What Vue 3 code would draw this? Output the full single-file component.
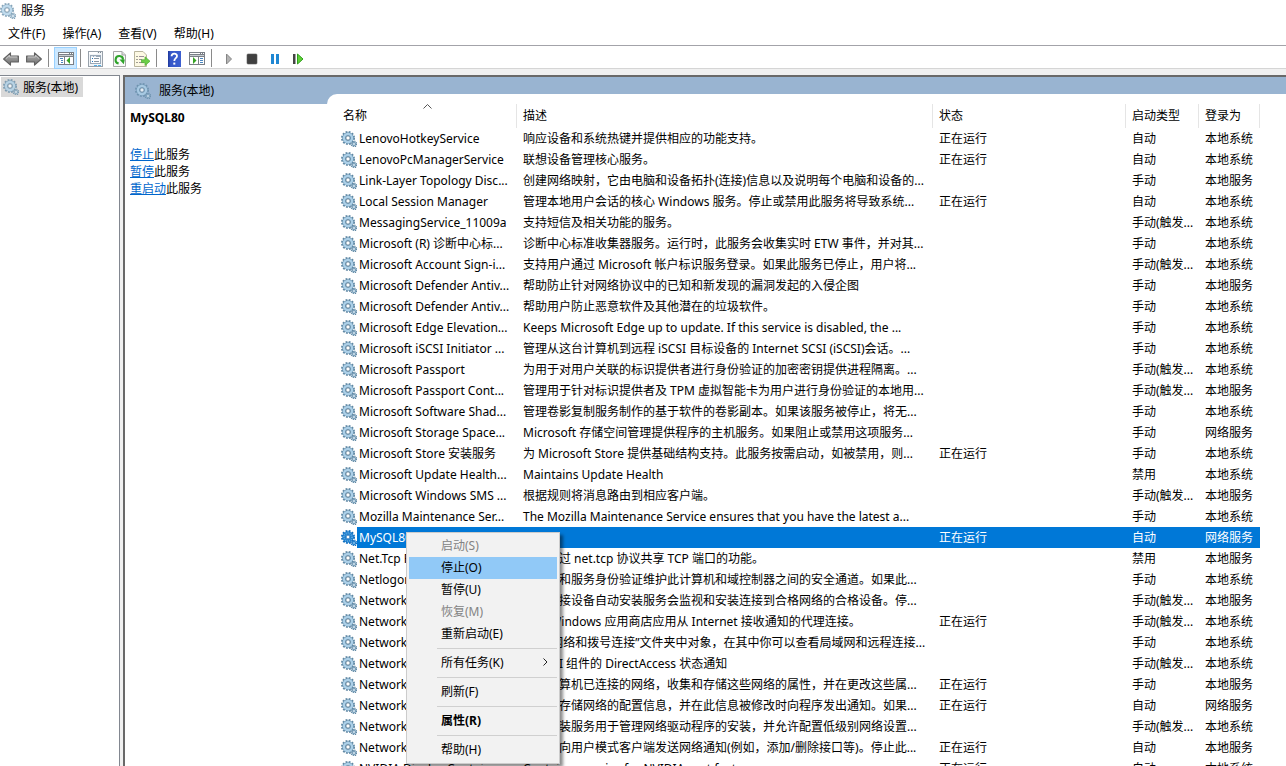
<script setup>
import { ref } from 'vue'

const menus = ['文件(F)', '操作(A)', '查看(V)', '帮助(H)']
const RUN = '正在运行'
const AUTO = '自动'
const MANUAL = '手动'
const TRIGGER = '手动(触发...'
const OFF = '禁用'
const SYS = '本地系统'
const LOCAL = '本地服务'
const NET = '网络服务'

const services = [
  ['LenovoHotkeyService', '响应设备和系统热键并提供相应的功能支持。', RUN, AUTO, SYS],
  ['LenovoPcManagerService', '联想设备管理核心服务。', RUN, AUTO, SYS],
  ['Link-Layer Topology Disc...', '创建网络映射，它由电脑和设备拓扑(连接)信息以及说明每个电脑和设备的...', '', MANUAL, LOCAL],
  ['Local Session Manager', '管理本地用户会话的核心 Windows 服务。停止或禁用此服务将导致系统...', RUN, AUTO, SYS],
  ['MessagingService_11009a', '支持短信及相关功能的服务。', '', TRIGGER, SYS],
  ['Microsoft (R) 诊断中心标...', '诊断中心标准收集器服务。运行时，此服务会收集实时 ETW 事件，并对其...', '', MANUAL, SYS],
  ['Microsoft Account Sign-i...', '支持用户通过 Microsoft 帐户标识服务登录。如果此服务已停止，用户将...', '', TRIGGER, SYS],
  ['Microsoft Defender Antiv...', '帮助防止针对网络协议中的已知和新发现的漏洞发起的入侵企图', '', MANUAL, LOCAL],
  ['Microsoft Defender Antiv...', '帮助用户防止恶意软件及其他潜在的垃圾软件。', '', MANUAL, SYS],
  ['Microsoft Edge Elevation...', 'Keeps Microsoft Edge up to update. If this service is disabled, the ...', '', MANUAL, SYS],
  ['Microsoft iSCSI Initiator ...', '管理从这台计算机到远程 iSCSI 目标设备的 Internet SCSI (iSCSI)会话。...', '', MANUAL, SYS],
  ['Microsoft Passport', '为用于对用户关联的标识提供者进行身份验证的加密密钥提供进程隔离。...', '', TRIGGER, SYS],
  ['Microsoft Passport Cont...', '管理用于针对标识提供者及 TPM 虚拟智能卡为用户进行身份验证的本地用...', '', TRIGGER, LOCAL],
  ['Microsoft Software Shad...', '管理卷影复制服务制作的基于软件的卷影副本。如果该服务被停止，将无...', '', MANUAL, SYS],
  ['Microsoft Storage Space...', 'Microsoft 存储空间管理提供程序的主机服务。如果阻止或禁用这项服务...', '', MANUAL, NET],
  ['Microsoft Store 安装服务', '为 Microsoft Store 提供基础结构支持。此服务按需启动，如被禁用，则...', RUN, MANUAL, SYS],
  ['Microsoft Update Health...', 'Maintains Update Health', '', OFF, SYS],
  ['Microsoft Windows SMS ...', '根据规则将消息路由到相应客户端。', '', TRIGGER, LOCAL],
  ['Mozilla Maintenance Ser...', 'The Mozilla Maintenance Service ensures that you have the latest a...', '', MANUAL, SYS],
  ['MySQL80', '', RUN, AUTO, NET],
  ['Net.Tcp Port Sharing Ser...', '提供通过 net.tcp 协议共享 TCP 端口的功能。', '', OFF, LOCAL],
  ['Netlogon', '为用户和服务身份验证维护此计算机和域控制器之间的安全通道。如果此...', '', MANUAL, SYS],
  ['Network Connected Devi...', '网络连接设备自动安装服务会监视和安装连接到合格网络的合格设备。停...', '', TRIGGER, LOCAL],
  ['Network Connection Bro...', '允许 Windows 应用商店应用从 Internet 接收通知的代理连接。', RUN, TRIGGER, SYS],
  ['Network Connections', '管理“网络和拨号连接”文件夹中对象，在其中你可以查看局域网和远程连接...', '', MANUAL, SYS],
  ['Network Connectivity Ass...', '提供 UI 组件的 DirectAccess 状态通知', '', TRIGGER, SYS],
  ['Network List Service', '识别计算机已连接的网络，收集和存储这些网络的属性，并在更改这些属...', RUN, MANUAL, LOCAL],
  ['Network Location Aware...', '收集和存储网络的配置信息，并在此信息被修改时向程序发出通知。如果...', RUN, AUTO, NET],
  ['Network Setup Service', '网络安装服务用于管理网络驱动程序的安装，并允许配置低级别网络设置...', '', TRIGGER, SYS],
  ['Network Store Interface S...', '此服务向用户模式客户端发送网络通知(例如，添加/删除接口等)。停止此...', RUN, AUTO, LOCAL],
  ['NVIDIA Display Container...', 'Container service for NVIDIA root features', RUN, AUTO, SYS],
]
const selected = ref(19)

const contextMenu = [
  { label: '启动(S)', disabled: true },
  { label: '停止(O)', active: true },
  { label: '暂停(U)' },
  { label: '恢复(M)', disabled: true },
  { label: '重新启动(E)' },
  { sep: true },
  { label: '所有任务(K)', sub: true },
  { sep: true },
  { label: '刷新(F)' },
  { sep: true },
  { label: '属性(R)', bold: true },
  { sep: true },
  { label: '帮助(H)' },
]
</script>

<template>
  <div class="window">
    <svg class="defs" aria-hidden="true">
      <symbol id="gear" viewBox="0 0 16 16">
        <circle cx="7" cy="7" r="6" fill="none" stroke="#5f87a3" stroke-width="2" stroke-dasharray="1.8 1.34" />
        <circle cx="7" cy="7" r="4" fill="none" stroke="#6d97b4" stroke-width="3.6" />
        <circle cx="7" cy="7" r="4" fill="none" stroke="#acd0e8" stroke-width="2.4" />
        <circle cx="7" cy="7" r="2.2" fill="#fff" stroke="#5d7f98" stroke-width="1" />
        <circle cx="13" cy="13" r="2.7" fill="none" stroke="#5f87a3" stroke-width="1.5" stroke-dasharray="1.2 .92" />
        <circle cx="13" cy="13" r="1.6" fill="#dcebf4" stroke="#7ba1bb" stroke-width="1.3" />
      </symbol>
      <symbol id="gear-on" viewBox="0 0 16 16">
        <circle cx="7" cy="7" r="6" fill="none" stroke="#0f6cbd" stroke-width="2" stroke-dasharray="1.8 1.34" />
        <circle cx="7" cy="7" r="4" fill="none" stroke="#1a7ccc" stroke-width="3.6" />
        <circle cx="7" cy="7" r="4" fill="none" stroke="#5aa7e2" stroke-width="2" stroke-dasharray="1 1" />
        <circle cx="7" cy="7" r="2" fill="#fff" stroke="#1b72bd" stroke-width="1" />
        <circle cx="13" cy="13" r="2.7" fill="none" stroke="#0f6cbd" stroke-width="1.5" stroke-dasharray="1.2 .92" />
        <circle cx="13" cy="13" r="1.6" fill="#8cc3ee" stroke="#2584cf" stroke-width="1.3" />
      </symbol>
      <linearGradient id="steel" x1="0" y1="0" x2="0" y2="1">
        <stop offset="0" stop-color="#b5b5b5" />
        <stop offset="1" stop-color="#6e6e6e" />
      </linearGradient>
      <linearGradient id="book" x1="0" y1="0" x2="1" y2="0">
        <stop offset="0" stop-color="#1d3799" />
        <stop offset=".2" stop-color="#3657c8" />
        <stop offset="1" stop-color="#3c5fd0" />
      </linearGradient>
    </svg>

    <header class="titlebar">
      <svg class="ico pale"><use href="#gear" /></svg>
      <span>服务</span>
    </header>

    <nav class="menubar">
      <button v-for="m in menus" :key="m" type="button">{{ m }}</button>
    </nav>

    <div class="toolbar" role="toolbar" aria-label="工具栏">
      <button type="button" class="tool arrow-tool" aria-label="后退">
        <svg class="ico" viewBox="0 0 16 16"><path d="M.6 8 7.5 1.8V5h7.9v6H7.5v3.2Z" fill="url(#steel)" stroke="#606060" stroke-width="1.1" stroke-linejoin="round" /><path d="M3 7.6l3.6-3.2V6H14" fill="none" stroke="#d0d0d0" stroke-width=".8" /></svg>
      </button>
      <button type="button" class="tool" aria-label="前进">
        <svg class="ico" viewBox="0 0 16 16"><path d="M15.4 8 8.5 1.8V5H.6v6h7.9v3.2Z" fill="url(#steel)" stroke="#606060" stroke-width="1.1" stroke-linejoin="round" /><path d="M2 6h7.4V4.4L13 7.6" fill="none" stroke="#d0d0d0" stroke-width=".8" /></svg>
      </button>
      <i class="rule" />
      <button type="button" class="tool pressed" aria-label="显示/隐藏控制台树">
        <svg class="ico" viewBox="0 0 16 16" shape-rendering="crispEdges"><path d="M0 1h16v13H0z" fill="#7a7f86" /><path d="M1 2h10v1H1zM12 2h1v1h-1zM14 2h1v1h-1z" fill="#fff" /><path d="M1 4h14v1H1z" fill="#c8cdd2" /><path d="M1 6h5v7H1zM7 6h8v7H7z" fill="#fff" /><path d="M2 7h3v1H2zM3 9h2v1H3zM3 11h2v1H3z" fill="#4a86c0" /><path d="M12 6v7L8.5 9.5z" fill="#36a324" shape-rendering="auto" /></svg>
      </button>
      <i class="rule after" />
      <button type="button" class="tool" aria-label="属性">
        <svg class="ico" viewBox="0 0 16 16" shape-rendering="crispEdges"><path d="M0 0h15v16H0z" fill="#98a1aa" /><path d="M1 1h13v14H1z" fill="#f2f5f8" /><path d="M1 1h8v2H1z" fill="#fff" /><path d="M10 1h1v1h-1zM12 1h1v1h-1z" fill="#7c8791" /><path d="M2 4h11v9H2z" fill="#9aa9b8" /><path d="M3 6h9v6H3z" fill="#fff" /><path d="M3 5h2v1H3zM6 5h2v1H6z" fill="#e6edf4" /><path d="M4 7h1v1H4zM4 10h1v1H4z" fill="#1e73bd" /><path d="M6 7h5v1H6zM6 10h5v1H6z" fill="#8795a3" /><path d="M6 14h3v1H6zM10 14h3v1h-3z" fill="#55b2ea" /></svg>
      </button>
      <button type="button" class="tool" aria-label="刷新">
        <svg class="ico" viewBox="0 0 16 16"><path d="M2.5.5h8.5l3.5 3.5v11.5h-12z" fill="#fafafa" stroke="#a6a6a6" /><path d="M11 .5V4h3.5" fill="#ddd" stroke="#a6a6a6" /><path d="M7.6 12.4a3.7 3.7 0 1 1 4.4-3.6" fill="none" stroke="#2fa32a" stroke-width="2.1" /><path d="M8.4 8.6h5.4l-1 4.6z" fill="#2fa32a" /></svg>
      </button>
      <button type="button" class="tool" aria-label="导出列表">
        <svg class="ico" viewBox="0 0 16 16"><path d="M.5.5h8.5l3.5 3.5v11.5H.5z" fill="#fdf9e4" stroke="#b8b49c" /><path d="M2.5 5.5h1M2.5 8.5h1M2.5 11.5h1" stroke="#444" /><path d="M5 5.5h5M5 8.5h3M5 11.5h5" stroke="#9b8f9b" /><path d="M7.5 8.8H11V5.8l5 4.4-5 4.4v-3H7.5z" fill="#6cce48" stroke="#4cae30" stroke-width=".7" /></svg>
      </button>
      <i class="rule" />
      <button type="button" class="tool" aria-label="帮助">
        <svg class="ico" viewBox="0 0 16 16"><path d="M2 0h13v16H2z" fill="url(#book)" /><path d="M5.6 5.2c0-3.3 5.4-3.3 5.4-.2 0 2.2-2.7 2.2-2.7 5" fill="none" stroke="#fff" stroke-width="1.8" /><path d="M7.3 11.6h2v2h-2z" fill="#fff" /></svg>
      </button>
      <button type="button" class="tool" aria-label="显示/隐藏操作窗格">
        <svg class="ico" viewBox="0 0 16 16" shape-rendering="crispEdges"><path d="M0 1h16v13H0z" fill="#7a7f86" /><path d="M1 2h10v1H1zM12 2h1v1h-1zM14 2h1v1h-1z" fill="#fff" /><path d="M1 4h14v1H1z" fill="#c8cdd2" /><path d="M1 6h8v7H1zM10 6h5v7h-5z" fill="#fff" /><path d="M11 7h3v1h-3zM11 9h3v1h-3zM11 11h3v1h-3z" fill="#4a86c0" /><path d="M4 6v7l3.5-3.5z" fill="#36a324" shape-rendering="auto" /></svg>
      </button>
      <i class="rule wide" />
      <button type="button" class="tool" aria-label="启动服务">
        <svg class="ico" viewBox="0 0 16 16"><path d="M5.5 3v10l5-5z" fill="#b4b4b4" stroke="#858585" /></svg>
      </button>
      <button type="button" class="tool" aria-label="停止服务">
        <svg class="ico" viewBox="0 0 16 16"><rect x="3" y="3" width="10" height="10" rx="1" fill="#404040" stroke="#5c5c5c" stroke-width=".6" /></svg>
      </button>
      <button type="button" class="tool" aria-label="暂停服务">
        <svg class="ico" viewBox="0 0 16 16"><path d="M4 3h3v10H4zM9 3h3v10H9z" fill="#1f87d3" /></svg>
      </button>
      <button type="button" class="tool" aria-label="重新启动服务">
        <svg class="ico" viewBox="0 0 16 16"><path d="M3 3h2.5v10H3z" fill="#444" /><path d="M7.5 3v10l5.5-5z" fill="#5fd038" stroke="#2fa01c" /></svg>
      </button>
    </div>

    <main class="body">
      <aside class="tree">
        <a class="node" href="#local"><svg class="ico pale"><use href="#gear" /></svg>服务(本地)</a>
      </aside>

      <section class="pane">
        <div class="side">
          <h1><svg class="ico pale"><use href="#gear" /></svg>服务(本地)</h1>
          <div class="detail">
            <h2>MySQL80</h2>
            <p><a href="#stop">停止</a>此服务</p>
            <p><a href="#pause">暂停</a>此服务</p>
            <p><a href="#restart">重启动</a>此服务</p>
          </div>
        </div>

        <div class="list">
          <table>
            <colgroup>
              <col class="c-name"><col><col class="c-state"><col class="c-type"><col class="c-logon">
            </colgroup>
            <thead>
              <tr>
                <th scope="col" aria-sort="ascending">名称<svg class="caret" viewBox="0 0 9 5"><path d="M.5 4.5l4-4 4 4" fill="none" stroke="#555" /></svg></th>
                <th scope="col">描述</th>
                <th scope="col">状态</th>
                <th scope="col">启动类型</th>
                <th scope="col">登录为</th>
              </tr>
            </thead>
            <tbody>
              <tr v-for="(s, i) in services" :key="i" :class="{ selected: i === selected }" @click="selected = i">
                <td class="name">
                  <div><svg class="ico"><use :href="i === selected ? '#gear-on' : '#gear'" /></svg><span>{{ s[0] }}</span></div>
                </td>
                <td>{{ s[1] }}</td>
                <td>{{ s[2] }}</td>
                <td>{{ s[3] }}</td>
                <td>{{ s[4] }}</td>
              </tr>
            </tbody>
          </table>
        </div>
      </section>
    </main>

    <div class="context" role="menu">
      <template v-for="(m, i) in contextMenu" :key="i">
        <hr v-if="m.sep">
        <button v-else type="button" role="menuitem" :disabled="m.disabled" :class="{ active: m.active, bold: m.bold }">
          {{ m.label }}
          <svg v-if="m.sub" class="arrow" viewBox="0 0 5 8"><path d="M.5.5l3.5 3.5-3.5 3.5" fill="none" stroke="#222" /></svg>
        </button>
      </template>
    </div>
  </div>
</template>

<style>
html, body { margin: 0; overflow: hidden; }
</style>

<style scoped>
.window {
  position: relative;
  display: flex;
  flex-direction: column;
  height: 100vh;
  overflow: hidden;
  background: #fff;
  color: #000;
  font: 12px/17px "Noto Sans", "Noto Sans CJK SC", sans-serif;
}
.defs { position: absolute; width: 0; height: 0; }
button { border: 0; padding: 0; background: none; color: inherit; font: inherit; }
.ico { flex: none; display: block; width: 16px; height: 16px; }
.pale { opacity: .75; }

.titlebar { display: flex; align-items: center; gap: 5px; height: 21px; }
.menubar { display: flex; gap: 1px; height: 24px; border-bottom: 1px solid #a3a3a9; }
.menubar button { padding: 0 8px; }

.toolbar { display: flex; align-items: center; height: 22px; padding-top: 1px; box-sizing: border-box; border-bottom: 1px solid #d5d5d5; height: 23px; }
.tool { flex: none; display: flex; align-items: center; justify-content: center; width: 23px; height: 22px; padding-top: 2px; box-sizing: border-box; }
.arrow-tool { width: 22px; }
.pressed { background: #cce8ff; box-shadow: inset 0 0 0 1px #99d1ff; }
.rule { flex: none; width: 1px; height: 18px; margin: 0 5px 0 3px; background: #8a8a8a; }
.rule.after { margin: 0 3px; }
.rule.wide { margin: 0 5px 0 3px; }

.body { flex: 1; display: flex; min-height: 0; padding-top: 6px; background: #f0f0f0; }
.tree { width: 119px; flex: none; border: solid #828790; border-width: 1px 1px 0 0; background: #fff; }
.node {
  display: inline-flex;
  align-items: center;
  gap: 4px;
  height: 20px;
  margin: 1px;
  padding: 0 5px 0 2px;
  background: #d9d9d9;
  color: inherit;
  text-decoration: none;
}
.pane {
  flex: 1;
  display: flex;
  min-width: 0;
  margin-left: 3px;
  border: solid #696969;
  border-width: 2px 0 0 2px;
  background: #99b4d1;
}
.side { width: 202px; flex: none; display: flex; flex-direction: column; }
h1 { display: flex; align-items: center; gap: 8px; height: 27px; margin: 0; padding-left: 10px; font: inherit; }
.detail { flex: 1; padding: 5px; background: #fff; }
h2 { margin: 0 0 20px; font-size: 12px; line-height: 17px; }
p { margin: 0; }
p a { color: #0066cc; }

.list {
  flex: 1;
  min-width: 0;
  margin-top: 17px;
  padding: 10px 26px 0 9px;
  border-top-left-radius: 10px;
  background: #fff;
  overflow: hidden;
}
table { width: 100%; table-layout: fixed; border-collapse: separate; border-spacing: 0; }
.c-name { width: 181px; }
.c-state { width: 193px; }
.c-type { width: 73px; }
.c-logon { width: 61px; }
th { position: relative; height: 24px; padding: 0 0 2px 6px; border-right: 1px solid #e5e5e5; box-sizing: border-box; text-align: left; font-weight: normal; }
th:first-child { padding-left: 7px; }
.caret { position: absolute; left: 87px; top: 0; width: 9px; height: 5px; }
td { height: 21px; padding: 0 0 0 6px; white-space: nowrap; overflow: hidden; box-sizing: border-box; }
td.name { padding-left: 5px; }
td.name div { display: flex; align-items: center; height: 21px; }
td.name span { flex: 1; padding-left: 2px; line-height: 21px; }
.selected { color: #fff; }
.selected td:not(.name), .selected span { background: #0078d7; }

.context {
  position: absolute;
  left: 406px;
  top: 532px;
  width: 154px;
  box-sizing: border-box;
  padding: 2px;
  border: 1px solid #ccc;
  background: #f2f2f2;
  box-shadow: 3px 3px 3px rgba(0, 0, 0, .45);
}
.context button { display: flex; align-items: center; justify-content: space-between; width: 100%; height: 22px; padding: 0 9px 2px 32px; }
.context button:disabled { color: #838383; }
.context .active { background: #91c9f7; }
.context .bold { font-weight: bold; }
.context hr { height: 1px; margin: 3px 0 3px 28px; border: 0; background: #d0d0d0; }
.arrow { width: 5px; height: 8px; }
</style>
